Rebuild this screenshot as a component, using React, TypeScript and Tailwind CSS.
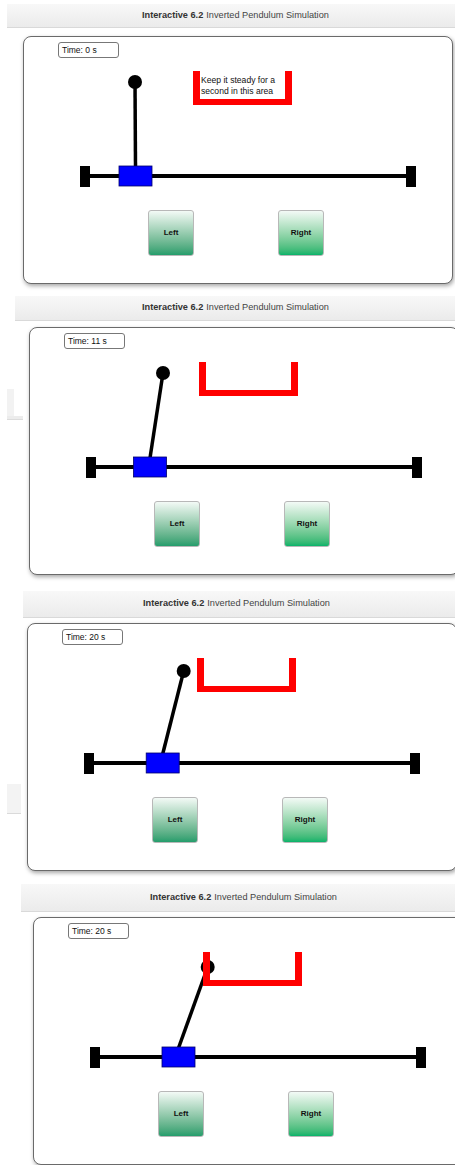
import React from "react";

type Panel = {
  mt: string;
  headerMl: string;
  headerH: string;
  headerPl: string;
  gap: string;
  boxMl: string;
  cartX: number;
  ball: [number, number];
  time: string;
  hint?: boolean;
  ghost?: "tall" | "short";
};

const panels: Panel[] = [
  { mt: "mt-[4px]", headerMl: "ml-[7px]", headerH: "h-[24px]", headerPl: "pl-[135px]", gap: "mt-[8px]", boxMl: "ml-[23px]", cartX: 111.5, ball: [111, 46], time: "Time: 0 s", hint: true },
  { mt: "mt-[12px]", headerMl: "ml-[15px]", headerH: "h-[25px]", headerPl: "pl-[127px]", gap: "mt-[6px]", boxMl: "ml-[6px]", cartX: 120, ball: [133, 46], time: "Time: 11 s", ghost: "tall" },
  { mt: "mt-[16px]", headerMl: "ml-[23px]", headerH: "h-[27px]", headerPl: "pl-[120px]", gap: "mt-[5px]", boxMl: "ml-[4px]", cartX: 134.7, ball: [155.7, 48], time: "Time: 20 s", ghost: "short" },
  { mt: "mt-[13px]", headerMl: "ml-[21px]", headerH: "h-[28px]", headerPl: "pl-[129px]", gap: "mt-[5px]", boxMl: "ml-[33px]", cartX: 144.5, ball: [173.7, 50], time: "Time: 20 s" },
];

// drawing of the cart, track and pendulum
function Sim({ cartX, ball, hint }: { cartX: number; ball: [number, number]; hint?: boolean }) {
  const by = ball[1] - 22;
  return (
    <svg width="430" height="138" className="block">
      <line x1="56" y1="118" x2="392" y2="118" stroke="#000" strokeWidth="4" />
      <rect x="56" y="108" width="10" height="21" fill="#000" />
      <rect x="382" y="108" width="10" height="21" fill="#000" />
      <line x1={cartX} y1="109" x2={ball[0]} y2={by} stroke="#000" strokeWidth="3.5" />
      <circle cx={ball[0]} cy={by} r="7" fill="#000" />
      <rect x={cartX - 16.5} y="108" width="33" height="20" fill="#0000ff" stroke="#00006a" strokeWidth="0.8" />
      <rect x="169" y="13" width="7" height="34" fill="#ff0000" />
      <rect x="261" y="13" width="7" height="34" fill="#ff0000" />
      <rect x="169" y="41" width="99" height="6" fill="#ff0000" />
      {hint && (
        <text fontFamily="'Liberation Sans', Arial, sans-serif" fontSize="8.6" fill="#111">
          <tspan x="177" y="25">Keep it steady for a</tspan>
          <tspan x="177" y="35.5">second in this area</tspan>
        </text>
      )}
    </svg>
  );
}

function SimPanel({ p }: { p: Panel }) {
  return (
    <div className={p.mt}>
      <div
        className={`${p.headerMl} ${p.headerH} ${p.headerPl} flex items-center bg-gradient-to-b from-[#f8f8f8] to-[#ebebeb] border-b border-[#d9d9d9] text-[9.2px] text-[#333] whitespace-nowrap`}
      >
        <span className="font-bold">Interactive 6.2</span>
        <span className="ml-[3px] text-[#444]">Inverted Pendulum Simulation</span>
      </div>
      <div className={`${p.gap} flex`}>
        {p.ghost === "tall" && (
          <div className="w-[23px] shrink-0 pl-[7px] pt-[62px]">
            <div className="w-[16px] h-[31px] flex flex-col">
              <div className="w-[7px] flex-1 bg-[#f2f2f2]" />
              <div className="h-[4px] bg-[#ececec] border-b border-[#dcdcdc]" />
            </div>
          </div>
        )}
        {p.ghost === "short" && (
          <div className="w-[23px] shrink-0 pl-[7px] pt-[161px]">
            <div className="w-[14px] h-[30px] bg-[#f3f3f3] border-b border-[#dadada]" />
          </div>
        )}
        <div
          className={`${p.boxMl} w-[430px] h-[248px] shrink-0 bg-white border-[1.5px] border-[#6a6a6a] rounded-[8px] shadow-[1px_2px_4px_rgba(0,0,0,0.35)] overflow-hidden`}
        >
          <div className="ml-[34px] mt-[5px] w-[61px] h-[16px] border border-[#777] rounded-[3px] flex items-center pl-[3px] text-[8.5px] text-[#111]">
            {p.time}
          </div>
          <Sim cartX={p.cartX} ball={p.ball} hint={p.hint} />
          <div className="mt-[14px] ml-[124px] flex gap-[84px]">
            <div className="w-[46px] h-[46px] rounded-[3px] border border-[#b8b8b8] bg-gradient-to-b from-[#f3faf6] to-[#229d6c] flex items-center justify-center text-[8px] font-bold text-[#111]">
              Left
            </div>
            <div className="w-[46px] h-[46px] rounded-[3px] border border-[#b8b8b8] bg-gradient-to-b from-[#f3faf6] to-[#00b36a] flex items-center justify-center text-[8px] font-bold text-[#111]">
              Right
            </div>
          </div>
        </div>
      </div>
    </div>
  );
}

export default function App() {
  return (
    <div className="w-[455px] h-[1165px] overflow-hidden bg-white font-['Liberation_Sans',Arial,sans-serif]">
      {panels.map((p, i) => (
        <SimPanel key={i} p={p} />
      ))}
    </div>
  );
}
